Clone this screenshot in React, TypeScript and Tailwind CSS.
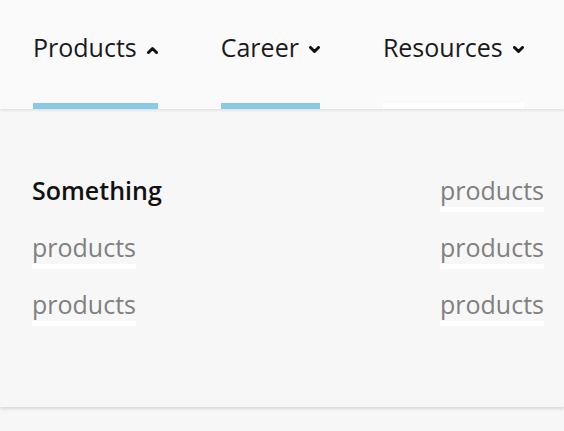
import React from "react";

function Chevron({ up }: { up?: boolean }) {
  return (
    <svg width="11" height="8" viewBox="0 0 11 8" className="ml-[10px] mt-[17px] shrink-0">
      <polyline
        points={up ? "1.5,6.5 5.5,2.5 9.5,6.5" : "1.5,1.5 5.5,5.5 9.5,1.5"}
        fill="none"
        stroke="#111"
        strokeWidth="3"
        strokeLinecap="round"
        strokeLinejoin="round"
      />
    </svg>
  );
}

function NavItem({ label, up, bar }: { label: string; up?: boolean; bar: string }) {
  return (
    <div className="flex h-full flex-col justify-between">
      <div className="flex items-start pt-[29px]">
        <span className="leading-normal">{label}</span>
        <Chevron up={up} />
      </div>
      <div className={`h-[6px] w-full ${bar}`} />
    </div>
  );
}

function Link({ children }: { children: React.ReactNode }) {
  return (
    <span className="inline-block border-b-[5px] border-white leading-[33px] text-[#808080]">
      {children}
    </span>
  );
}

export default function App() {
  return (
    <div
      className="min-h-[431px] w-[564px] bg-[#f7f7f7] text-[25px]"
      style={{ fontFamily: '"Open Sans", "Noto Sans", sans-serif' }}
    >
      <div className="relative z-10 flex h-[109px] gap-[63px] bg-[#fafafa] pl-[33px] text-[#1a1a1a] shadow-[0_1px_3px_rgba(0,0,0,0.12)]">
        <NavItem label="Products" up bar="bg-[#89cbe6]" />
        <NavItem label="Career" bar="bg-[#89cbe6]" />
        <NavItem label="Resources" bar="bg-white" />
      </div>
      <div className="flex h-[298px] justify-between bg-[#f7f7f7] pl-[32px] pr-[20px] pt-[65px] shadow-[0_2px_3px_rgba(0,0,0,0.13)]">
        <div className="flex flex-col items-start gap-[19px]">
          <span className="inline-block border-b-[5px] border-transparent font-semibold leading-[33px] text-[#111]">
            Something
          </span>
          <Link>products</Link>
          <Link>products</Link>
        </div>
        <div className="flex flex-col items-end gap-[19px]">
          <Link>products</Link>
          <Link>products</Link>
          <Link>products</Link>
        </div>
      </div>
    </div>
  );
}
